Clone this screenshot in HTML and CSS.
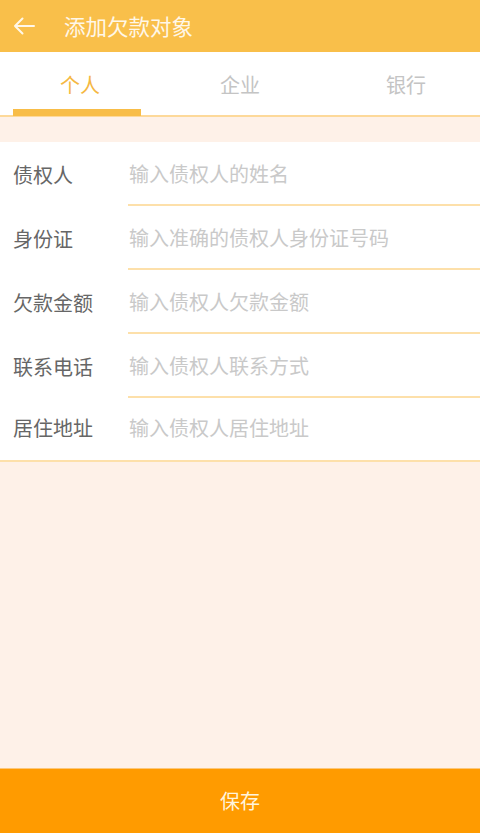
FILE: index.html
```html
<!DOCTYPE html>
<html lang="zh-CN">
<head>
<meta charset="utf-8">
<title>添加欠款对象</title>
<link rel="stylesheet" href="styles.css">
</head>
<body>
<div class="page">
  <header class="topbar">
    <span class="back">
      <svg width="22" height="18" viewBox="0 0 22 18"><path d="M21 9H2M9.5 1.5L2 9l7.5 7.5" fill="none" stroke="#fff7e8" stroke-width="2" stroke-linecap="round" stroke-linejoin="round"/></svg>
    </span>
    <h1 class="title">添加欠款对象</h1>
  </header>
  <nav class="tabs">
    <div class="tab active"><span>个人</span></div>
    <div class="tab"><span>企业</span></div>
    <div class="tab third"><span>银行</span></div>
  </nav>
  <div class="gap"></div>
  <section class="form">
    <div class="row"><div class="label">债权人</div><div class="field">输入债权人的姓名</div></div>
    <div class="row"><div class="label">身份证</div><div class="field">输入准确的债权人身份证号码</div></div>
    <div class="row"><div class="label">欠款金额</div><div class="field">输入债权人欠款金额</div></div>
    <div class="row"><div class="label">联系电话</div><div class="field">输入债权人联系方式</div></div>
    <div class="row last"><div class="label">居住地址</div><div class="field">输入债权人居住地址</div></div>
  </section>
  <div class="filler"></div>
  <button class="save">保存</button>
</div>
</body>
</html>
```
FILE: styles.css
```css
* { box-sizing: border-box; }
html, body { margin: 0; padding: 0; }
body {
  font-family: "Noto Sans CJK SC", "Noto Sans", sans-serif;
  background: #fef1e8;
}
.page {
  width: 480px;
  height: 833px;
  display: flex;
  flex-direction: column;
}
.topbar {
  height: 52px;
  background: #f9bf4a;
  display: flex;
  align-items: center;
  flex-shrink: 0;
}
.back {
  width: 64px;
  padding-left: 13px;
  display: flex;
  align-items: center;
}
.title {
  margin: 0;
  font-size: 21.5px;
  font-weight: 400;
  color: #fff7e8;
  line-height: 1;
}
.tabs {
  height: 65px;
  background: #fff;
  display: flex;
  border-bottom: 2px solid #fdd99a;
  flex-shrink: 0;
}
.tab {
  width: 160px;
  display: flex;
  flex-direction: column;
  align-items: center;
  padding-top: 20px;
  font-size: 20px;
  line-height: 26px;
  color: #c4c4c4;
}
.tab.third { padding-left: 12px; }
.tab.active {
  color: #f5b843;
  position: relative;
}
.tab.active::after {
  content: "";
  position: absolute;
  left: 13px;
  width: 128px;
  bottom: -1px;
  height: 7px;
  background: #f8bd48;
}
.gap { height: 25px; flex-shrink: 0; }
.form {
  background: #fff;
  border-bottom: 2px solid #fde0aa;
  flex-shrink: 0;
}
.row {
  height: 64px;
  display: flex;
}
.label {
  width: 128px;
  padding-left: 13px;
  display: flex;
  align-items: center;
  font-size: 20px;
  color: #666;
}
.field {
  flex: 1;
  display: flex;
  align-items: center;
  padding-left: 1px;
  font-size: 20px;
  color: #c9c9c9;
  border-bottom: 2px solid #fde0aa;
}
.row.last { height: 62px; }
.row.last .field { border-bottom: none; padding-bottom: 4px; }
.row.last .label { padding-bottom: 4px; }
.filler { flex: 1; }
.save {
  height: 65px;
  flex-shrink: 0;
  border: none;
  border-top: 1px solid #fcc77a;
  background: #ff9b00;
  color: #fff4dc;
  font-family: inherit;
  font-size: 20px;
  padding: 0;
  padding-bottom: 2px;
}
```
